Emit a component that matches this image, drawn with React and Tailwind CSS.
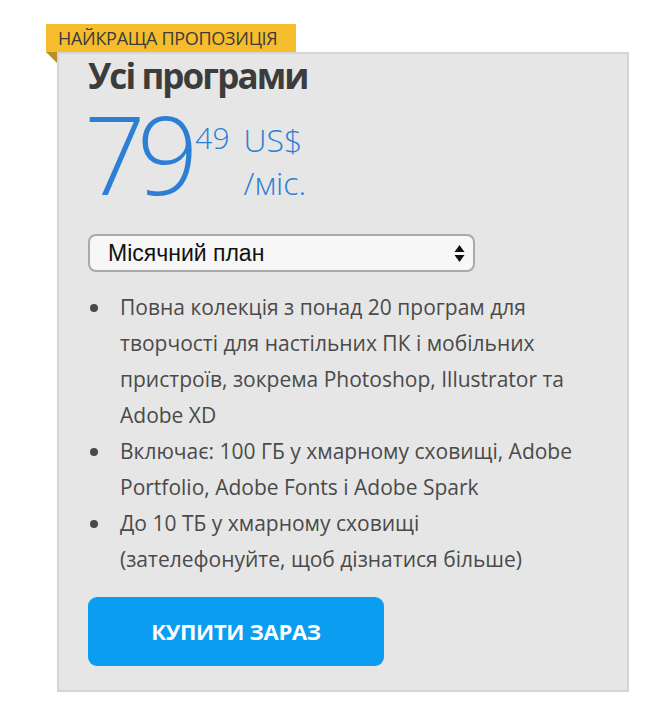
const features = [
  <>Повна колекція з понад 20 програм для творчості для настільних ПК і мобільних пристроїв, зокрема Photoshop, Illustrator та Adobe XD</>,
  <>Включає: 100 ГБ у хмарному сховищі, Adobe Portfolio, Adobe Fonts і Adobe Spark</>,
  <>До 10 ТБ у хмарному сховищі<br />(зателефонуйте, щоб дізнатися більше)</>,
];

const SortArrows = () => (
  <svg width="11" height="19" viewBox="0 0 11 19" className="text-[#111]">
    <path d="M5.5 1 L10.5 8 L0.5 8 Z" fill="currentColor" />
    <path d="M5.5 18 L10.5 11 L0.5 11 Z" fill="currentColor" />
  </svg>
);

export default function App() {
  return (
    <div className="min-h-screen bg-white pt-[24px] pl-[46px] font-['Open_Sans',sans-serif]">
      {/* badge */}
      <div className="w-[250px] h-[28px] bg-[#f5bd2c] flex items-center pl-[12px]">
        <span className="text-[18px] text-[#3b3b3b] tracking-[-0.3px] leading-none">
          НАЙКРАЩА ПРОПОЗИЦІЯ
        </span>
      </div>

      <div className="relative ml-[11px] w-[572px] bg-[#e6e6e6] border-2 border-[#d5d5d5] pl-[29px] pt-[2px] pb-[24px]">
        {/* fold under the badge */}
        <div className="absolute -left-[13px] -top-[2px] w-0 h-0 border-t-[11px] border-t-[#b89024] border-l-[11px] border-l-transparent" />

        <h2 className="text-[35px] font-bold text-[#3c3c3c] leading-[40px] tracking-[-1.9px]">
          Усі програми
        </h2>

        {/* price */}
        <div className="flex items-start mt-[13px] text-[#2c7fd4]">
          <span className="text-[108px] font-light leading-[90px] tracking-[-9px] -ml-[4px]">79</span>
          <span className="text-[30px] font-light leading-none ml-[6px] mt-[14px]">49</span>
          <div className="flex flex-col ml-[14px] mt-[9px] text-[32px] font-light leading-[43px]">
            <span>US$</span>
            <span>/міс.</span>
          </div>
        </div>

        {/* plan select */}
        <div className="mt-[30px] w-[387px] h-[38px] rounded-[8px] border-2 border-[#a9a9a9] bg-[#f7f7f7] flex items-center justify-between pl-[18px] pr-[8px]">
          <span className="text-[23px] text-[#111] font-['Liberation_Sans',sans-serif]">Місячний план</span>
          <SortArrows />
        </div>

        {/* features */}
        <ul className="mt-[17px] w-[504px] flex flex-col">
          {features.map((f, i) => (
            <li key={i} className="flex text-[21px] leading-[36px] text-[#4a4a4a]">
              <span className="w-[8px] h-[8px] rounded-full bg-[#4a4a4a] mt-[15px] ml-[2px] mr-[22px] shrink-0" />
              <span className="flex-1">{f}</span>
            </li>
          ))}
        </ul>

        <button className="mt-[20px] w-[296px] h-[69px] rounded-[9px] bg-[#0a9df0] text-white text-[22px] font-bold tracking-[-0.3px]">
          КУПИТИ ЗАРАЗ
        </button>
      </div>
    </div>
  );
}
